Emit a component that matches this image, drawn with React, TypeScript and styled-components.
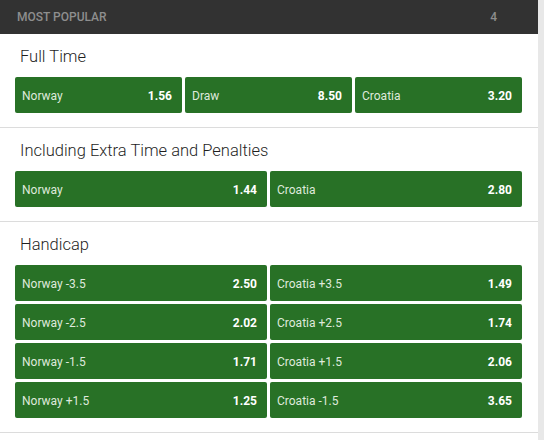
import React from "react";
import styled, { createGlobalStyle } from "styled-components";

const Global = createGlobalStyle`
  html, body { margin: 0; padding: 0; background: #fff; }
  body { font-family: Roboto, "Liberation Sans", Arial, sans-serif; }
  * { box-sizing: border-box; }
`;

const Page = styled.div`
  display: flex;
  width: 544px;
  height: 440px;
  overflow: hidden;
  background: #fff;
`;

const Main = styled.div`
  width: 538px;
  display: flex;
  flex-direction: column;
`;

const Scroll = styled.div`
  width: 6px;
  background: #e8e8e8;
`;

const Header = styled.div`
  height: 34px;
  background: #323232;
  display: flex;
  align-items: center;
  justify-content: space-between;
  padding: 0 41px 0 17px;
  color: #8e8e8e;
  font-size: 12px;
  font-weight: 500;
  text-transform: uppercase;
`;

const Section = styled.section`
  padding: 13px 16px 14px 15px;
  border-bottom: 1px solid #dcdcdc;
`;

const Title = styled.h3`
  margin: 0 0 10px 5px;
  font-size: 16.5px;
  line-height: 20px;
  font-weight: 300;
  color: #1f1f1f;
`;

const Grid = styled.div<{ $cols: number }>`
  display: grid;
  grid-template-columns: repeat(${(p) => p.$cols}, 1fr);
  grid-auto-rows: 36px;
  gap: 3px;
`;

const Bet = styled.div`
  background: #287126;
  border-radius: 2px;
  display: flex;
  align-items: center;
  justify-content: space-between;
  padding: 1px 10px 0 7px;
  font-size: 12px;
`;

const Name = styled.span`
  color: #dfe9dc;
`;

const Odds = styled.span`
  color: #fff;
  font-weight: 700;
`;

type Market = { title: string; cols: number; bets: [string, string][] };

const markets: Market[] = [
  {
    title: "Full Time",
    cols: 3,
    bets: [
      ["Norway", "1.56"],
      ["Draw", "8.50"],
      ["Croatia", "3.20"],
    ],
  },
  {
    title: "Including Extra Time and Penalties",
    cols: 2,
    bets: [
      ["Norway", "1.44"],
      ["Croatia", "2.80"],
    ],
  },
  {
    title: "Handicap",
    cols: 2,
    bets: [
      ["Norway -3.5", "2.50"],
      ["Croatia +3.5", "1.49"],
      ["Norway -2.5", "2.02"],
      ["Croatia +2.5", "1.74"],
      ["Norway -1.5", "1.71"],
      ["Croatia +1.5", "2.06"],
      ["Norway +1.5", "1.25"],
      ["Croatia -1.5", "3.65"],
    ],
  },
];

export default function App() {
  return (
    <Page>
      <Global />
      <Main>
        <Header>
          <span>Most Popular</span>
          <span>4</span>
        </Header>
        {markets.map((m) => (
          <Section key={m.title}>
            <Title>{m.title}</Title>
            <Grid $cols={m.cols}>
              {m.bets.map(([n, o]) => (
                <Bet key={n}>
                  <Name>{n}</Name>
                  <Odds>{o}</Odds>
                </Bet>
              ))}
            </Grid>
          </Section>
        ))}
      </Main>
      <Scroll />
    </Page>
  );
}
